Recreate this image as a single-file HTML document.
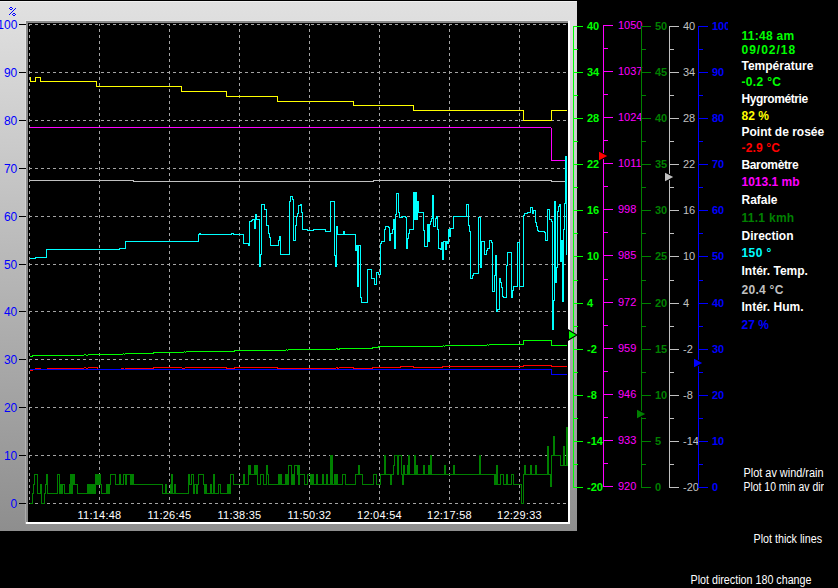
<!DOCTYPE html>
<html><head><meta charset="utf-8"><title>Graph</title>
<style>
html,body{margin:0;padding:0;background:#000;width:838px;height:588px;overflow:hidden;}
svg{display:block;font-family:"Liberation Sans",sans-serif;}
</style></head><body>
<svg width="838" height="588" viewBox="0 0 838 588" font-family="Liberation Sans, sans-serif"><defs><linearGradient id="pg" x1="0" y1="0" x2="0" y2="1"><stop offset="0" stop-color="#e1e1e1"/><stop offset="1" stop-color="#8e8e8e"/></linearGradient><clipPath id="pc"><rect x="28" y="23" width="540" height="499"/></clipPath><clipPath id="bc"><rect x="0" y="0" width="728" height="588"/></clipPath></defs><rect x="0" y="0" width="838" height="588" fill="#000"/><rect x="0" y="1" width="577" height="530" fill="url(#pg)"/><rect x="0" y="1" width="577" height="1" fill="#f0f0f0"/><rect x="25" y="20" width="545" height="1" fill="#ffffff" fill-opacity="0.3"/><rect x="25" y="21" width="1" height="503" fill="#ffffff" fill-opacity="0.25"/><rect x="26" y="21" width="544" height="2" fill="#8a8a8a"/><rect x="26" y="21" width="2" height="503" fill="#8a8a8a"/><rect x="26" y="522" width="544" height="2" fill="#ffffff"/><rect x="568" y="21" width="2" height="503" fill="#ffffff"/><rect x="28" y="23" width="540" height="499" fill="#000"/><path d="M29,24.5 H568 M29,72.5 H568 M29,120.5 H568 M29,168.5 H568 M29,216.5 H568 M29,264.5 H568 M29,311.5 H568 M29,359.5 H568 M29,407.5 H568 M29,455.5 H568 M29,503.5 H568 " stroke="#a4a4a4" stroke-width="1" stroke-dasharray="3 3" fill="none" shape-rendering="crispEdges"/><path d="M29.5,24 V503 M99.5,24 V503 M169.5,24 V503 M239.5,24 V503 M309.5,24 V503 M379.5,24 V503 M449.5,24 V503 M519.5,24 V503 " stroke="#a4a4a4" stroke-width="1" stroke-dasharray="3 3" stroke-dashoffset="1" fill="none" shape-rendering="crispEdges"/><rect x="19" y="24" width="7" height="1" fill="#000"/><text x="17.3" y="29" fill="#0000ff" font-size="12" text-anchor="end">100</text><rect x="19" y="72" width="7" height="1" fill="#000"/><text x="17.3" y="77" fill="#0000ff" font-size="12" text-anchor="end">90</text><rect x="19" y="120" width="7" height="1" fill="#000"/><text x="17.3" y="125" fill="#0000ff" font-size="12" text-anchor="end">80</text><rect x="19" y="168" width="7" height="1" fill="#000"/><text x="17.3" y="173" fill="#0000ff" font-size="12" text-anchor="end">70</text><rect x="19" y="216" width="7" height="1" fill="#000"/><text x="17.3" y="221" fill="#0000ff" font-size="12" text-anchor="end">60</text><rect x="19" y="264" width="7" height="1" fill="#000"/><text x="17.3" y="269" fill="#0000ff" font-size="12" text-anchor="end">50</text><rect x="19" y="311" width="7" height="1" fill="#000"/><text x="17.3" y="316" fill="#0000ff" font-size="12" text-anchor="end">40</text><rect x="19" y="359" width="7" height="1" fill="#000"/><text x="17.3" y="364" fill="#0000ff" font-size="12" text-anchor="end">30</text><rect x="19" y="407" width="7" height="1" fill="#000"/><text x="17.3" y="412" fill="#0000ff" font-size="12" text-anchor="end">20</text><rect x="19" y="455" width="7" height="1" fill="#000"/><text x="17.3" y="460" fill="#0000ff" font-size="12" text-anchor="end">10</text><rect x="19" y="503" width="7" height="1" fill="#000"/><text x="17.3" y="508" fill="#0000ff" font-size="12" text-anchor="end">0</text><rect x="10" y="7" width="1" height="1" fill="#0000ff"/><rect x="11" y="7" width="1" height="1" fill="#0000ff"/><rect x="9" y="8" width="1" height="1" fill="#0000ff"/><rect x="12" y="8" width="1" height="1" fill="#0000ff"/><rect x="10" y="9" width="1" height="1" fill="#0000ff"/><rect x="11" y="9" width="1" height="1" fill="#0000ff"/><rect x="15" y="8" width="1" height="1" fill="#0000ff"/><rect x="14" y="9" width="1" height="1" fill="#0000ff"/><rect x="13" y="10" width="1" height="1" fill="#0000ff"/><rect x="12" y="11" width="1" height="1" fill="#0000ff"/><rect x="11" y="12" width="1" height="1" fill="#0000ff"/><rect x="10" y="13" width="1" height="1" fill="#0000ff"/><rect x="9" y="14" width="1" height="1" fill="#0000ff"/><rect x="13" y="13" width="1" height="1" fill="#0000ff"/><rect x="14" y="13" width="1" height="1" fill="#0000ff"/><rect x="12" y="14" width="1" height="1" fill="#0000ff"/><rect x="15" y="14" width="1" height="1" fill="#0000ff"/><rect x="13" y="15" width="1" height="1" fill="#0000ff"/><rect x="14" y="15" width="1" height="1" fill="#0000ff"/><text x="99.5" y="519" fill="#ffffff" font-size="11" text-anchor="middle" letter-spacing="0.25">11:14:48</text><text x="169.5" y="519" fill="#ffffff" font-size="11" text-anchor="middle" letter-spacing="0.25">11:26:45</text><text x="239.5" y="519" fill="#ffffff" font-size="11" text-anchor="middle" letter-spacing="0.25">11:38:35</text><text x="309.5" y="519" fill="#ffffff" font-size="11" text-anchor="middle" letter-spacing="0.25">11:50:32</text><text x="379.5" y="519" fill="#ffffff" font-size="11" text-anchor="middle" letter-spacing="0.25">12:04:54</text><text x="449.5" y="519" fill="#ffffff" font-size="11" text-anchor="middle" letter-spacing="0.25">12:17:58</text><text x="519.5" y="519" fill="#ffffff" font-size="11" text-anchor="middle" letter-spacing="0.25">12:29:33</text><g clip-path="url(#pc)" shape-rendering="crispEdges"><path d="M29.5,77.5 H30.5 V81.5 H35.5 V77.5 H40.5 V81.5 H96.5 V86.5 H181.5 V91.5 H226.5 V96.5 H277.5 V101.5 H353.5 V105.5 H413.5 V110.5 H523.5 V120.5 H551.5 V110.5 H566.5" stroke="#ffff00" stroke-width="1" fill="none"/><path d="M29.5,127.5 H550.5 L551.5,128.5 V160.5 H565.5" stroke="#ff00ff" stroke-width="1" fill="none"/><path d="M29.5,180.5 H133.5 V181.5 H373.5 V180.5 H551.5 V181.5 H566.5" stroke="#c0c0c0" stroke-width="1" fill="none"/><path d="M29.5,356.5 H32.5 V355.5 H83.5 L84.5,354.5 H85.5 L86.5,355.5 H87.5 L88.5,354.5 H122.5 L123.5,353.5 L124.5,354.5 L125.5,353.5 H153.5 V352.5 H183.5 L184.5,351.5 L185.5,352.5 L186.5,351.5 H234.5 V350.5 H285.5 L286.5,349.5 L287.5,350.5 L288.5,349.5 H335.5 L336.5,348.5 L338.5,349.5 L340.5,348.5 H372.5 V347.5 H378.5 V346.5 H442.5 L443.5,345.5 L444.5,346.5 L445.5,345.5 H486.5 L487.5,344.5 L488.5,345.5 L489.5,344.5 H523.5 V340.5 H551.5 V345.5 H566.5" stroke="#00ff00" stroke-width="1" fill="none"/><path d="M29.5,370.5 H32.5 V369.5 H35.5 V368.5 H40.5 V369.5 H47.5 V368.5 H83.5 L84.5,367.5 H85.5 L86.5,368.5 H87.5 L88.5,367.5 H97.5 V369.5 H121.5 V368.5 H123.5 V369.5 H125.5 V368.5 H153.5 V367.5 H181.5 L182.5,368.5 H184.5 L185.5,367.5 H226.5 V368.5 H234.5 V367.5 H277.5 V368.5 H335.5 L336.5,367.5 L338.5,368.5 L339.5,367.5 H353.5 V368.5 H372.5 V367.5 H400.5 V366.5 H413.5 V367.5 H442.5 V366.5 H523.5 V365.5 H551.5 V366.5 H566.5" stroke="#ff0000" stroke-width="1" fill="none"/><path d="M29.5,369.5 H551.5 V374.5 H566.5" stroke="#0000ff" stroke-width="1" fill="none"/><path d="M29.5,503.5 H32.5 V493.5 H33.5 V484.5 H34.5 V474.5 H37.5 V493.5 H41.5 V503.5 H44.5 V493.5 H45.5 V484.5 H47.5 V493.5 H57.5 V474.5 H59.5 V484.5 H64.5 V493.5 H69.5 V484.5 H77.5 V493.5 H95.5 V484.5 H101.5 V493.5 H109.5 V484.5 H110.5 V474.5 H115.5 V484.5 H123.5 V474.5 H133.5 V484.5 H162.5 V493.5 H170.5 V484.5 H171.5 V493.5 H188.5 V474.5 H189.5 V484.5 H191.5 V474.5 H193.5 V484.5 H198.5 V474.5 H203.5 V484.5 H205.5 V493.5 H218.5 V484.5 H220.5 V493.5 H230.5 V474.5 H233.5 V484.5 H248.5 V465.5 H250.5 V474.5 H257.5 V484.5 H260.5 V474.5 H263.5 V484.5 H266.5 V474.5 H268.5 V484.5 H288.5 V465.5 H291.5 V484.5 H294.5 V465.5 H297.5 V474.5 H304.5 V484.5 H307.5 V474.5 H310.5 V484.5 H330.5 V455.5 H332.5 V484.5 H342.5 V474.5 H345.5 V484.5 H355.5 V474.5 H362.5 V484.5 H373.5 V474.5 H376.5 V484.5 H380.5 V474.5 H393.5 V465.5 H394.5 V455.5 H401.5 V474.5 H494.5 V484.5 H496.5 V465.5 H497.5 V484.5 H500.5 V474.5 H503.5 V484.5 H511.5 V474.5 H513.5 V484.5 H521.5 V503.5 H523.5 V474.5 H551.5 V455.5 H560.5 V465.5 H567.5 V465.5" stroke="#008000" stroke-width="1" fill="none"/><rect x="40" y="484" width="2" height="10" fill="#008000"/><rect x="46" y="474" width="2" height="11" fill="#008000"/><rect x="59" y="484" width="4" height="10" fill="#008000"/><rect x="70" y="474" width="3" height="20" fill="#008000"/><rect x="73" y="474" width="2" height="11" fill="#008000"/><rect x="87" y="484" width="4" height="10" fill="#008000"/><rect x="91" y="484" width="4" height="10" fill="#008000"/><rect x="95" y="474" width="6" height="11" fill="#008000"/><rect x="106" y="484" width="3" height="10" fill="#008000"/><rect x="119" y="474" width="2" height="11" fill="#008000"/><rect x="125" y="474" width="2" height="11" fill="#008000"/><rect x="130" y="474" width="3" height="11" fill="#008000"/><rect x="165" y="484" width="2" height="10" fill="#008000"/><rect x="171" y="474" width="2" height="20" fill="#008000"/><rect x="174" y="484" width="2" height="10" fill="#008000"/><rect x="193" y="484" width="2" height="10" fill="#008000"/><rect x="196" y="484" width="2" height="10" fill="#008000"/><rect x="204" y="484" width="3" height="10" fill="#008000"/><rect x="210" y="484" width="2" height="10" fill="#008000"/><rect x="213" y="474" width="2" height="20" fill="#008000"/><rect x="227" y="484" width="3" height="10" fill="#008000"/><rect x="243" y="474" width="2" height="11" fill="#008000"/><rect x="248" y="465" width="2" height="10" fill="#008000"/><rect x="254" y="465" width="4" height="10" fill="#008000"/><rect x="266" y="465" width="2" height="10" fill="#008000"/><rect x="278" y="474" width="4" height="11" fill="#008000"/><rect x="285" y="474" width="3" height="11" fill="#008000"/><rect x="291" y="474" width="4" height="11" fill="#008000"/><rect x="298" y="465" width="2" height="20" fill="#008000"/><rect x="311" y="474" width="3" height="11" fill="#008000"/><rect x="316" y="474" width="2" height="11" fill="#008000"/><rect x="322" y="474" width="2" height="11" fill="#008000"/><rect x="326" y="474" width="2" height="11" fill="#008000"/><rect x="330" y="455" width="2" height="30" fill="#008000"/><rect x="334" y="474" width="4" height="11" fill="#008000"/><rect x="358" y="465" width="2" height="10" fill="#008000"/><rect x="384" y="455" width="2" height="20" fill="#008000"/><rect x="390" y="474" width="2" height="11" fill="#008000"/><rect x="397" y="455" width="2" height="20" fill="#008000"/><rect x="402" y="474" width="2" height="11" fill="#008000"/><rect x="403" y="465" width="2" height="10" fill="#008000"/><rect x="407" y="465" width="1" height="10" fill="#008000"/><rect x="408" y="455" width="2" height="20" fill="#008000"/><rect x="414" y="455" width="2" height="20" fill="#008000"/><rect x="415" y="465" width="3" height="10" fill="#008000"/><rect x="423" y="465" width="2" height="10" fill="#008000"/><rect x="428" y="465" width="2" height="10" fill="#008000"/><rect x="430" y="455" width="2" height="20" fill="#008000"/><rect x="444" y="465" width="2" height="10" fill="#008000"/><rect x="453" y="465" width="2" height="10" fill="#008000"/><rect x="479" y="455" width="2" height="20" fill="#008000"/><rect x="494" y="474" width="2" height="11" fill="#008000"/><rect x="506" y="474" width="2" height="11" fill="#008000"/><rect x="524" y="465" width="2" height="10" fill="#008000"/><rect x="530" y="465" width="2" height="10" fill="#008000"/><rect x="535" y="465" width="2" height="10" fill="#008000"/><rect x="547" y="446" width="2" height="29" fill="#008000"/><rect x="550" y="474" width="2" height="13" fill="#008000"/><rect x="553" y="436" width="2" height="20" fill="#008000"/><rect x="563" y="446" width="2" height="20" fill="#008000"/><rect x="566" y="427" width="2" height="39" fill="#008000"/><path d="M29.5,258.5 H35.5 V257.5 H46.5 V249.5 H119.5 V248.5 H125.5 V241.5 H198.5 V234.5 H199.5 V233.5 H200.5 V234.5 H231.5 V233.5 H233.5 V234.5 H243.5 V243.5 H248.5 V245.5 H249.5 V221.5 H251.5 V220.5 H252.5 V219.5 H254.5 V228.5 H255.5 V214.5 H256.5 V219.5 H259.5 V266.5 H260.5 V254.5 H261.5 V204.5 H264.5 V209.5 H266.5 V225.5 H268.5 V233.5 H269.5 V237.5 H270.5 V245.5 H278.5 V240.5 H279.5 V236.5 H280.5 V254.5 H289.5 V201.5 H290.5 V196.5 H292.5 V199.5 H293.5 V240.5 H295.5 V225.5 H296.5 V216.5 H297.5 V213.5 H298.5 V205.5 H300.5 V204.5 H301.5 V212.5 H302.5 V229.5 H307.5 V230.5 H313.5 V229.5 H325.5 V231.5 H330.5 V201.5 H334.5 V255.5 H335.5 V266.5 H336.5 V226.5 H337.5 V234.5 H343.5 V231.5 H344.5 V234.5 H355.5 V250.5 H356.5 V245.5 H357.5 V286.5 H358.5 V245.5 H360.5 V297.5 H361.5 V302.5 H367.5 V269.5 H371.5 V278.5 H374.5 V284.5 H376.5 V272.5 H378.5 V274.5 H380.5 V243.5 H381.5 V241.5 H384.5 V229.5 H385.5 V226.5 H388.5 V227.5 H389.5 V240.5 H390.5 V233.5 H392.5 V229.5 H393.5 V219.5 H394.5 V248.5 H395.5 V214.5 H396.5 V193.5 H398.5 V212.5 H399.5 V217.5 H402.5 V216.5 H405.5 V217.5 H406.5 V248.5 H407.5 V238.5 H408.5 V233.5 H409.5 V229.5 H413.5 V192.5 H414.5 V219.5 H415.5 V192.5 H416.5 V219.5 H417.5 V201.5 H418.5 V212.5 H423.5 V230.5 H424.5 V246.5 H427.5 V224.5 H428.5 V241.5 H429.5 V224.5 H430.5 V221.5 H431.5 V218.5 H432.5 V195.5 H433.5 V226.5 H435.5 V218.5 H436.5 V216.5 H437.5 V229.5 H438.5 V248.5 H440.5 V249.5 H441.5 V242.5 H442.5 V259.5 H443.5 V241.5 H445.5 V249.5 H446.5 V241.5 H447.5 V243.5 H448.5 V229.5 H449.5 V236.5 H450.5 V228.5 H453.5 V216.5 H466.5 V204.5 H468.5 V225.5 H469.5 V231.5 H470.5 V278.5 H472.5 V275.5 H473.5 V273.5 H478.5 V217.5 H480.5 V267.5 H481.5 V241.5 H484.5 V254.5 H486.5 V250.5 H487.5 V248.5 H489.5 V240.5 H491.5 V242.5 H492.5 V291.5 H494.5 V275.5 H495.5 V255.5 H496.5 V311.5 H497.5 V309.5 H499.5 V278.5 H500.5 V282.5 H501.5 V287.5 H502.5 V296.5 H503.5 V297.5 H506.5 V265.5 H507.5 V252.5 H511.5 V297.5 H512.5 V290.5 H513.5 V286.5 H517.5 V242.5 H519.5 V286.5 H523.5 V215.5 H524.5 V213.5 H527.5 V212.5 H530.5 V207.5 H532.5 V213.5 H533.5 V210.5 H535.5 V222.5 H536.5 V226.5 H537.5 V230.5 H538.5 V231.5 H544.5 V232.5 H545.5 V240.5 H547.5 V209.5 H549.5 V219.5 H551.5 V221.5 H552.5 V329.5 H553.5 V300.5 H554.5 V201.5 H555.5 V282.5 H556.5 V267.5 H557.5 V211.5 H558.5 V206.5 H559.5 V204.5 H560.5 V261.5 H561.5 V240.5 H562.5 V301.5 H563.5 V229.5 H564.5 V203.5 H565.5 V156.5 H566.5 V254.5" stroke="#00ffff" stroke-width="1" fill="none"/></g><rect x="573" y="26" width="1" height="462" fill="#00ff00"/><rect x="573" y="26" width="10" height="1" fill="#00ff00"/><text x="587" y="30" fill="#00ff00" font-size="11" font-weight="bold" text-anchor="start">40</text><rect x="573" y="49" width="5" height="1" fill="#00ff00"/><rect x="573" y="72" width="10" height="1" fill="#00ff00"/><text x="587" y="76" fill="#00ff00" font-size="11" font-weight="bold" text-anchor="start">34</text><rect x="573" y="95" width="5" height="1" fill="#00ff00"/><rect x="573" y="118" width="10" height="1" fill="#00ff00"/><text x="587" y="122" fill="#00ff00" font-size="11" font-weight="bold" text-anchor="start">28</text><rect x="573" y="141" width="5" height="1" fill="#00ff00"/><rect x="573" y="164" width="10" height="1" fill="#00ff00"/><text x="587" y="168" fill="#00ff00" font-size="11" font-weight="bold" text-anchor="start">22</text><rect x="573" y="187" width="5" height="1" fill="#00ff00"/><rect x="573" y="210" width="10" height="1" fill="#00ff00"/><text x="587" y="214" fill="#00ff00" font-size="11" font-weight="bold" text-anchor="start">16</text><rect x="573" y="233" width="5" height="1" fill="#00ff00"/><rect x="573" y="256" width="10" height="1" fill="#00ff00"/><text x="587" y="260" fill="#00ff00" font-size="11" font-weight="bold" text-anchor="start">10</text><rect x="573" y="280" width="5" height="1" fill="#00ff00"/><rect x="573" y="303" width="10" height="1" fill="#00ff00"/><text x="587" y="307" fill="#00ff00" font-size="11" font-weight="bold" text-anchor="start">4</text><rect x="573" y="326" width="5" height="1" fill="#00ff00"/><rect x="573" y="349" width="10" height="1" fill="#00ff00"/><text x="587" y="353" fill="#00ff00" font-size="11" font-weight="bold" text-anchor="start">-2</text><rect x="573" y="372" width="5" height="1" fill="#00ff00"/><rect x="573" y="395" width="10" height="1" fill="#00ff00"/><text x="587" y="399" fill="#00ff00" font-size="11" font-weight="bold" text-anchor="start">-8</text><rect x="573" y="418" width="5" height="1" fill="#00ff00"/><rect x="573" y="441" width="10" height="1" fill="#00ff00"/><text x="587" y="445" fill="#00ff00" font-size="11" font-weight="bold" text-anchor="start">-14</text><rect x="573" y="464" width="5" height="1" fill="#00ff00"/><rect x="573" y="487" width="10" height="1" fill="#00ff00"/><text x="587" y="491" fill="#00ff00" font-size="11" font-weight="bold" text-anchor="start">-20</text><rect x="603" y="25" width="1" height="462" fill="#ff00ff"/><rect x="603" y="25" width="10" height="1" fill="#ff00ff"/><text x="618" y="29" fill="#ff00ff" font-size="11" text-anchor="start">1050</text><rect x="603" y="48" width="5" height="1" fill="#ff00ff"/><rect x="603" y="71" width="10" height="1" fill="#ff00ff"/><text x="618" y="75" fill="#ff00ff" font-size="11" text-anchor="start">1037</text><rect x="603" y="94" width="5" height="1" fill="#ff00ff"/><rect x="603" y="117" width="10" height="1" fill="#ff00ff"/><text x="618" y="121" fill="#ff00ff" font-size="11" text-anchor="start">1024</text><rect x="603" y="140" width="5" height="1" fill="#ff00ff"/><rect x="603" y="163" width="10" height="1" fill="#ff00ff"/><text x="618" y="167" fill="#ff00ff" font-size="11" text-anchor="start">1011</text><rect x="603" y="186" width="5" height="1" fill="#ff00ff"/><rect x="603" y="209" width="10" height="1" fill="#ff00ff"/><text x="618" y="213" fill="#ff00ff" font-size="11" text-anchor="start">998</text><rect x="603" y="232" width="5" height="1" fill="#ff00ff"/><rect x="603" y="255" width="10" height="1" fill="#ff00ff"/><text x="618" y="259" fill="#ff00ff" font-size="11" text-anchor="start">985</text><rect x="603" y="279" width="5" height="1" fill="#ff00ff"/><rect x="603" y="302" width="10" height="1" fill="#ff00ff"/><text x="618" y="306" fill="#ff00ff" font-size="11" text-anchor="start">972</text><rect x="603" y="325" width="5" height="1" fill="#ff00ff"/><rect x="603" y="348" width="10" height="1" fill="#ff00ff"/><text x="618" y="352" fill="#ff00ff" font-size="11" text-anchor="start">959</text><rect x="603" y="371" width="5" height="1" fill="#ff00ff"/><rect x="603" y="394" width="10" height="1" fill="#ff00ff"/><text x="618" y="398" fill="#ff00ff" font-size="11" text-anchor="start">946</text><rect x="603" y="417" width="5" height="1" fill="#ff00ff"/><rect x="603" y="440" width="10" height="1" fill="#ff00ff"/><text x="618" y="444" fill="#ff00ff" font-size="11" text-anchor="start">933</text><rect x="603" y="463" width="5" height="1" fill="#ff00ff"/><rect x="603" y="486" width="10" height="1" fill="#ff00ff"/><text x="618" y="490" fill="#ff00ff" font-size="11" text-anchor="start">920</text><rect x="641" y="26" width="1" height="462" fill="#008000"/><rect x="641" y="26" width="10" height="1" fill="#008000"/><text x="655" y="30" fill="#008000" font-size="11" font-weight="bold" text-anchor="start">50</text><rect x="641" y="49" width="5" height="1" fill="#008000"/><rect x="641" y="72" width="10" height="1" fill="#008000"/><text x="655" y="76" fill="#008000" font-size="11" font-weight="bold" text-anchor="start">45</text><rect x="641" y="95" width="5" height="1" fill="#008000"/><rect x="641" y="118" width="10" height="1" fill="#008000"/><text x="655" y="122" fill="#008000" font-size="11" font-weight="bold" text-anchor="start">40</text><rect x="641" y="141" width="5" height="1" fill="#008000"/><rect x="641" y="164" width="10" height="1" fill="#008000"/><text x="655" y="168" fill="#008000" font-size="11" font-weight="bold" text-anchor="start">35</text><rect x="641" y="187" width="5" height="1" fill="#008000"/><rect x="641" y="210" width="10" height="1" fill="#008000"/><text x="655" y="214" fill="#008000" font-size="11" font-weight="bold" text-anchor="start">30</text><rect x="641" y="233" width="5" height="1" fill="#008000"/><rect x="641" y="256" width="10" height="1" fill="#008000"/><text x="655" y="260" fill="#008000" font-size="11" font-weight="bold" text-anchor="start">25</text><rect x="641" y="280" width="5" height="1" fill="#008000"/><rect x="641" y="303" width="10" height="1" fill="#008000"/><text x="655" y="307" fill="#008000" font-size="11" font-weight="bold" text-anchor="start">20</text><rect x="641" y="326" width="5" height="1" fill="#008000"/><rect x="641" y="349" width="10" height="1" fill="#008000"/><text x="655" y="353" fill="#008000" font-size="11" font-weight="bold" text-anchor="start">15</text><rect x="641" y="372" width="5" height="1" fill="#008000"/><rect x="641" y="395" width="10" height="1" fill="#008000"/><text x="655" y="399" fill="#008000" font-size="11" font-weight="bold" text-anchor="start">10</text><rect x="641" y="418" width="5" height="1" fill="#008000"/><rect x="641" y="441" width="10" height="1" fill="#008000"/><text x="655" y="445" fill="#008000" font-size="11" font-weight="bold" text-anchor="start">5</text><rect x="641" y="464" width="5" height="1" fill="#008000"/><rect x="641" y="487" width="10" height="1" fill="#008000"/><text x="655" y="491" fill="#008000" font-size="11" font-weight="bold" text-anchor="start">0</text><rect x="669" y="26" width="1" height="462" fill="#c0c0c0"/><rect x="669" y="26" width="10" height="1" fill="#c0c0c0"/><text x="683" y="30" fill="#c0c0c0" font-size="11" text-anchor="start">40</text><rect x="669" y="49" width="5" height="1" fill="#c0c0c0"/><rect x="669" y="72" width="10" height="1" fill="#c0c0c0"/><text x="683" y="76" fill="#c0c0c0" font-size="11" text-anchor="start">34</text><rect x="669" y="95" width="5" height="1" fill="#c0c0c0"/><rect x="669" y="118" width="10" height="1" fill="#c0c0c0"/><text x="683" y="122" fill="#c0c0c0" font-size="11" text-anchor="start">28</text><rect x="669" y="141" width="5" height="1" fill="#c0c0c0"/><rect x="669" y="164" width="10" height="1" fill="#c0c0c0"/><text x="683" y="168" fill="#c0c0c0" font-size="11" text-anchor="start">22</text><rect x="669" y="187" width="5" height="1" fill="#c0c0c0"/><rect x="669" y="210" width="10" height="1" fill="#c0c0c0"/><text x="683" y="214" fill="#c0c0c0" font-size="11" text-anchor="start">16</text><rect x="669" y="233" width="5" height="1" fill="#c0c0c0"/><rect x="669" y="256" width="10" height="1" fill="#c0c0c0"/><text x="683" y="260" fill="#c0c0c0" font-size="11" text-anchor="start">10</text><rect x="669" y="280" width="5" height="1" fill="#c0c0c0"/><rect x="669" y="303" width="10" height="1" fill="#c0c0c0"/><text x="683" y="307" fill="#c0c0c0" font-size="11" text-anchor="start">4</text><rect x="669" y="326" width="5" height="1" fill="#c0c0c0"/><rect x="669" y="349" width="10" height="1" fill="#c0c0c0"/><text x="683" y="353" fill="#c0c0c0" font-size="11" text-anchor="start">-2</text><rect x="669" y="372" width="5" height="1" fill="#c0c0c0"/><rect x="669" y="395" width="10" height="1" fill="#c0c0c0"/><text x="683" y="399" fill="#c0c0c0" font-size="11" text-anchor="start">-8</text><rect x="669" y="418" width="5" height="1" fill="#c0c0c0"/><rect x="669" y="441" width="10" height="1" fill="#c0c0c0"/><text x="683" y="445" fill="#c0c0c0" font-size="11" text-anchor="start">-14</text><rect x="669" y="464" width="5" height="1" fill="#c0c0c0"/><rect x="669" y="487" width="10" height="1" fill="#c0c0c0"/><text x="683" y="491" fill="#c0c0c0" font-size="11" text-anchor="start">-20</text><g clip-path="url(#bc)"><rect x="698" y="26" width="1" height="462" fill="#0000ff"/><rect x="698" y="26" width="10" height="1" fill="#0000ff"/><text x="712" y="30" fill="#0000ff" font-size="11" font-weight="bold" text-anchor="start">100</text><rect x="698" y="49" width="5" height="1" fill="#0000ff"/><rect x="698" y="72" width="10" height="1" fill="#0000ff"/><text x="712" y="76" fill="#0000ff" font-size="11" font-weight="bold" text-anchor="start">90</text><rect x="698" y="95" width="5" height="1" fill="#0000ff"/><rect x="698" y="118" width="10" height="1" fill="#0000ff"/><text x="712" y="122" fill="#0000ff" font-size="11" font-weight="bold" text-anchor="start">80</text><rect x="698" y="141" width="5" height="1" fill="#0000ff"/><rect x="698" y="164" width="10" height="1" fill="#0000ff"/><text x="712" y="168" fill="#0000ff" font-size="11" font-weight="bold" text-anchor="start">70</text><rect x="698" y="187" width="5" height="1" fill="#0000ff"/><rect x="698" y="210" width="10" height="1" fill="#0000ff"/><text x="712" y="214" fill="#0000ff" font-size="11" font-weight="bold" text-anchor="start">60</text><rect x="698" y="233" width="5" height="1" fill="#0000ff"/><rect x="698" y="256" width="10" height="1" fill="#0000ff"/><text x="712" y="260" fill="#0000ff" font-size="11" font-weight="bold" text-anchor="start">50</text><rect x="698" y="280" width="5" height="1" fill="#0000ff"/><rect x="698" y="303" width="10" height="1" fill="#0000ff"/><text x="712" y="307" fill="#0000ff" font-size="11" font-weight="bold" text-anchor="start">40</text><rect x="698" y="326" width="5" height="1" fill="#0000ff"/><rect x="698" y="349" width="10" height="1" fill="#0000ff"/><text x="712" y="353" fill="#0000ff" font-size="11" font-weight="bold" text-anchor="start">30</text><rect x="698" y="372" width="5" height="1" fill="#0000ff"/><rect x="698" y="395" width="10" height="1" fill="#0000ff"/><text x="712" y="399" fill="#0000ff" font-size="11" font-weight="bold" text-anchor="start">20</text><rect x="698" y="418" width="5" height="1" fill="#0000ff"/><rect x="698" y="441" width="10" height="1" fill="#0000ff"/><text x="712" y="445" fill="#0000ff" font-size="11" font-weight="bold" text-anchor="start">10</text><rect x="698" y="464" width="5" height="1" fill="#0000ff"/><rect x="698" y="487" width="10" height="1" fill="#0000ff"/><text x="712" y="491" fill="#0000ff" font-size="11" font-weight="bold" text-anchor="start">0</text></g><polygon points="598.5,150 598.5,162 609,156" fill="#000"/><polygon points="599,151.8 599,160.2 607.2,156" fill="#ff0000"/><polygon points="568,329 568,341 578,335" fill="#000"/><polygon points="569,331 569,339 576,335" fill="#00ff00"/><polygon points="664.5,171 664.5,183 675,177" fill="#000"/><polygon points="665,172.8 665,181.2 673.2,177" fill="#c0c0c0"/><polygon points="693.5,357 693.5,369 704,363" fill="#000"/><polygon points="694,358.8 694,367.2 702.2,363" fill="#0000ff"/><polygon points="636.5,408 636.5,420 647,414" fill="#000"/><polygon points="637,409.8 637,418.2 645.2,414" fill="#008000"/><text x="741.5" y="40" fill="#00ff00" font-size="12" font-weight="bold" text-anchor="start" letter-spacing="0.28">11:48 am</text><text x="741.5" y="54" fill="#00ff00" font-size="12" font-weight="bold" text-anchor="start" letter-spacing="1.0">09/02/18</text><text x="741.5" y="70" fill="#ffffff" font-size="12" font-weight="bold" text-anchor="start">Température</text><text x="741.5" y="86" fill="#00ff00" font-size="12" font-weight="bold" text-anchor="start" letter-spacing="0.33">-0.2 °C</text><text x="741.5" y="103" fill="#ffffff" font-size="12" font-weight="bold" text-anchor="start" letter-spacing="-0.4">Hygrométrie</text><text x="741.5" y="120" fill="#ffff00" font-size="12" font-weight="bold" text-anchor="start">82 %</text><text x="741.5" y="136" fill="#ffffff" font-size="12" font-weight="bold" text-anchor="start">Point de rosée</text><text x="741.5" y="152" fill="#ff0000" font-size="12" font-weight="bold" text-anchor="start" letter-spacing="0.17">-2.9 °C</text><text x="741.5" y="169" fill="#ffffff" font-size="12" font-weight="bold" text-anchor="start" letter-spacing="-0.37">Baromètre</text><text x="741.5" y="186" fill="#ff00ff" font-size="12" font-weight="bold" text-anchor="start">1013.1 mb</text><text x="741.5" y="204" fill="#ffffff" font-size="12" font-weight="bold" text-anchor="start">Rafale</text><text x="741.5" y="222" fill="#008000" font-size="12" font-weight="bold" text-anchor="start" letter-spacing="0.28">11.1 kmh</text><text x="741.5" y="240" fill="#ffffff" font-size="12" font-weight="bold" text-anchor="start">Direction</text><text x="741.5" y="257" fill="#00ffff" font-size="12" font-weight="bold" text-anchor="start" letter-spacing="0.4">150 °</text><text x="741.5" y="275" fill="#ffffff" font-size="12" font-weight="bold" text-anchor="start">Intér. Temp.</text><text x="741.5" y="294" fill="#c0c0c0" font-size="12" font-weight="bold" text-anchor="start" letter-spacing="0.28">20.4 °C</text><text x="741.5" y="311" fill="#ffffff" font-size="12" font-weight="bold" text-anchor="start">Intér. Hum.</text><text x="741.5" y="329" fill="#0000ff" font-size="12" font-weight="bold" text-anchor="start">27 %</text><text x="743.5" y="477" fill="#ffffff" font-size="12" textLength="80" lengthAdjust="spacingAndGlyphs">Plot av wind/rain</text><clipPath id="c10"><rect x="0" y="0" width="824" height="588"/></clipPath><g clip-path="url(#c10)"><text x="743.5" y="491" fill="#ffffff" font-size="12" textLength="80.5" lengthAdjust="spacingAndGlyphs">Plot 10 min av dir</text></g><text x="753.5" y="543" fill="#ffffff" font-size="12" textLength="68.5" lengthAdjust="spacingAndGlyphs">Plot thick lines</text><text x="690.5" y="584" fill="#ffffff" font-size="12" textLength="121" lengthAdjust="spacingAndGlyphs">Plot direction 180 change</text></svg>
</body></html>
